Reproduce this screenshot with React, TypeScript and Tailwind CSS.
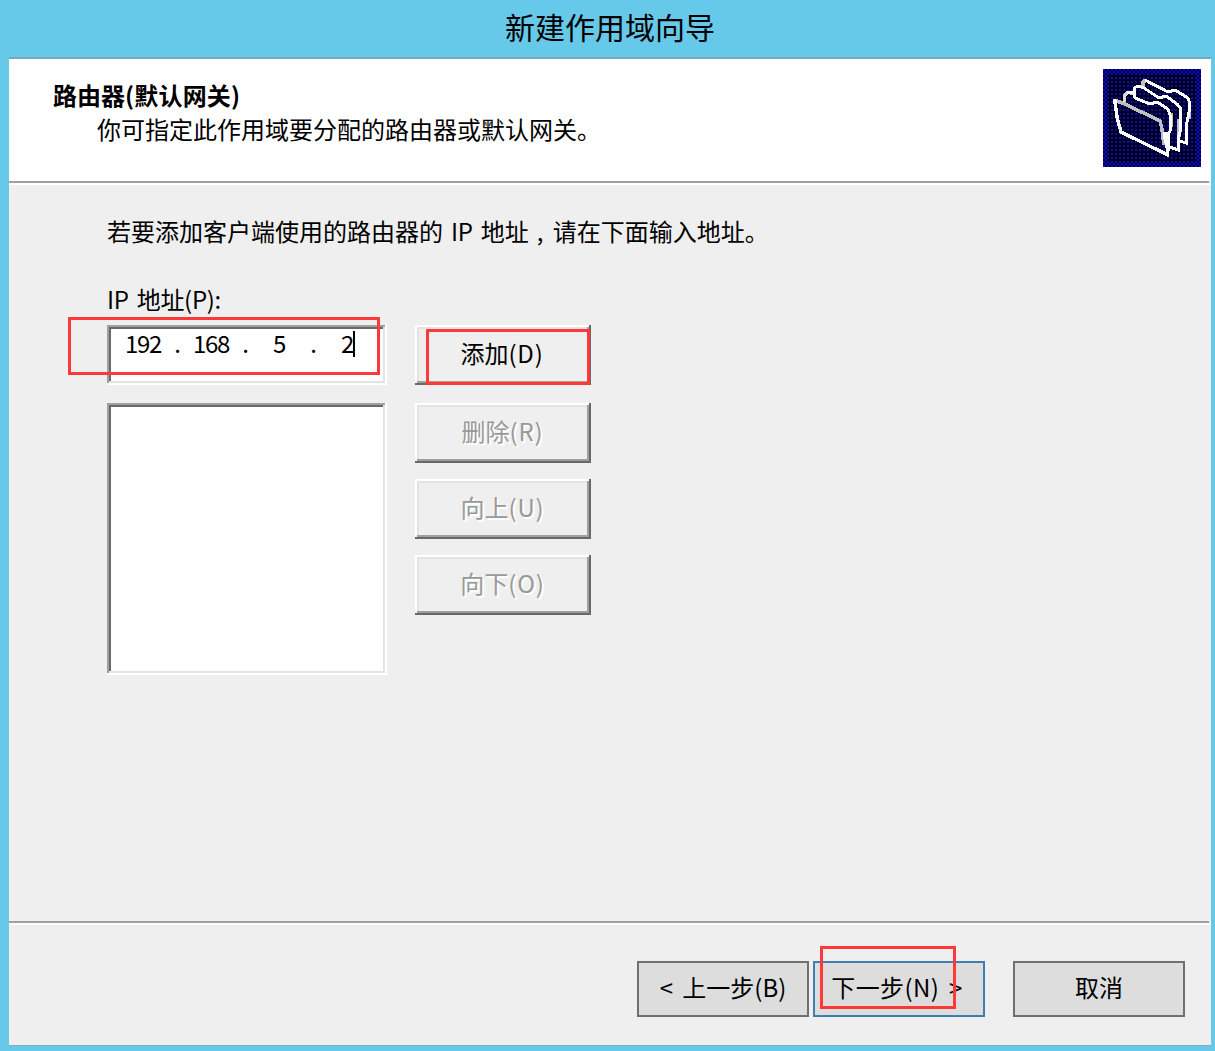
import React, { useState } from 'react';
import clsx from 'clsx';

const octets = ['192', '168', '5', '2'];

const sunken =
  'bg-white shadow-[inset_-2px_-2px_#fff,inset_2px_2px_#a0a0a0,inset_-4px_-4px_#e3e3e3,inset_4px_4px_#696969]';
const raised =
  'shadow-[inset_-2px_-2px_#696969,inset_2px_2px_#fff,inset_-4px_-4px_#a0a0a0,inset_4px_4px_#e3e3e3]';

const FolderIcon = () => (
  <svg width="98" height="98" viewBox="0 0 49 49" shapeRendering="crispEdges" fill="none">
    <defs>
      <pattern id="checker" width="2" height="2" patternUnits="userSpaceOnUse">
        <rect width="2" height="2" fill="#000" />
        <rect width="1" height="1" fill="#00f" />
        <rect x="1" y="1" width="1" height="1" fill="#00f" />
      </pattern>
      <pattern id="dots" width="2" height="2" patternUnits="userSpaceOnUse">
        <rect width="2" height="2" fill="#000" />
        <rect width="1" height="1" fill="#00f" />
      </pattern>
    </defs>
    <rect width="49" height="49" fill="url(#checker)" />
    <rect x="3" y="3" width="43" height="43" fill="url(#dots)" />
    {/* back folder */}
    <path d="M20 9V6.5L21.5 5.5" stroke="#c0c0c0" strokeWidth="2" />
    <path d="M43.5 19V25M42 28V37" stroke="#c0c0c0" strokeWidth="1.4" />
    <path d="M21 5.5L32.5 11.5L36 10.5L42.5 14.5L43.3 17V20L41.5 29V37L38.5 36" stroke="#fff" strokeWidth="1.5" />
    {/* third folder */}
    <path d="M38 25V34" stroke="#c0c0c0" strokeWidth="1.8" />
    <path d="M15.5 13V9.5L17.5 8.5L20.5 9.5L28 14.5L31.5 13.5L37 17.5L38.7 19.5V31L37.5 35V40.5L33.5 39" stroke="#fff" strokeWidth="1.5" />
    {/* second folder */}
    <path d="M10.8 17V13L12.5 11.8L15.5 12" stroke="#d8d8d8" strokeWidth="1.8" />
    <path d="M34.2 22V29" stroke="#c0c0c0" strokeWidth="1.8" />
    <path d="M12 11.5H15.5L16 14.5L23.5 17.5L27 16.5L32.5 20L33.5 23V31L32.5 33" stroke="#fff" strokeWidth="1.5" />
    {/* front folder */}
    <path d="M5.5 15.5L11 17.5L28.5 26L29.5 30L30.5 38" stroke="#c0c0c0" strokeWidth="1.8" />
    <path d="M5.8 15L7 24L9 31.5L32.5 43" stroke="#fff" strokeWidth="1.7" />
    <path d="M30 31.5H33.5V38L33 44H32L31 38L30 34Z" fill="#fff" />
  </svg>
);

const SideButton = ({ text, hotkey, disabled = false }: { text: string; hotkey: string; disabled?: boolean }) => (
  <button
    disabled={disabled}
    className={clsx(
      'h-[60px] w-44 pb-1',
      raised,
      disabled ? 'pr-px text-[#999] [text-shadow:2px_2px_0_#fff]' : 'pr-0.5'
    )}
  >
    {text}
    <span className="tracking-[0.8px]">({hotkey})</span>
  </button>
);

const FooterButton = ({ label, primary = false }: { label: string; primary?: boolean }) => (
  <button
    className={clsx(
      'h-14 w-[172px] whitespace-pre border-2 bg-[#ddd] pb-1 [word-spacing:4px]',
      primary ? 'border-[#3c7fb1] pr-1 tracking-[0.4px]' : 'border-[#707070]'
    )}
  >
    {label}
  </button>
);

const App = () => {
  const [routers] = useState<string[]>([]);

  return (
    <div className="flex h-[1051px] w-[1215px] flex-col bg-[#66c9ea] pr-1 pl-[9px] pb-[5px] font-['Noto_Sans_CJK_SC',sans-serif] text-2xl leading-none text-black">
      {/* Title bar */}
      <div className="flex h-[59px] shrink-0 items-center justify-center border-b-2 border-[#74a9c4] pb-1.5 text-[30px]">
        新建作用域向导
      </div>

      <div className="flex flex-1 flex-col border-b border-[#7badc3] bg-[#efefef]">
        {/* Header */}
        <header className="flex h-[122px] justify-between bg-white pt-[10px] pr-[10px] pl-11">
          <div className="pt-3.5">
            <h1 className="font-bold">
              路由器<span className="tracking-[0.2px]">(默认网关)</span>
            </h1>
            <p className="mt-[10px] pl-11">你可指定此作用域要分配的路由器或默认网关。</p>
          </div>
          <FolderIcon />
        </header>
        <div className="mr-0.5 h-0.5 bg-[#a0a0a0]" />
        <div className="h-0.5 bg-white" />

        {/* Body */}
        <main className="h-[736px] pt-[34px] pl-[98px]">
          <p className="whitespace-pre">
            若要添加客户端使用的路由器的<span className="tracking-[-0.3px] [word-spacing:3px]"> IP </span>地址
            <span className="inline-block w-6 pl-2 text-left">,</span>请在下面输入地址。
          </p>
          <p className="mt-11 tracking-[-0.3px] [word-spacing:3px]">IP 地址(P):</p>

          <div className="mt-3.5 flex gap-7">
            <div className="flex flex-col gap-[18px]">
              <div className={clsx('relative h-[60px] w-[280px]', sunken)}>
                <div className="flex pt-1.5 pl-2.5 tracking-[-1.3px]">
                  {octets.map((octet, i) => (
                    <React.Fragment key={i}>
                      {i > 0 && <span className="w-4 text-center">.</span>}
                      <span className={clsx(i === 3 ? 'w-8 text-right' : 'w-[52px] text-center')}>{octet}</span>
                    </React.Fragment>
                  ))}
                  <span className="h-[26px] w-0.5 shrink-0 bg-black" />
                </div>
                <div className="absolute top-[-8px] left-[-39px] h-[58px] w-[312px] border-3 border-[#ff3838]" />
              </div>
              <div className={clsx('h-[272px] w-[280px] p-1', sunken)}>
                <ul>
                  {routers.map((ip) => (
                    <li key={ip}>{ip}</li>
                  ))}
                </ul>
              </div>
            </div>

            <div className="flex flex-col gap-4">
              <div className="relative mb-0.5 h-[60px]">
                <SideButton text="添加" hotkey="D" />
                <div className="absolute top-1 left-[11px] h-14 w-[164px] border-3 border-[#ff3838]" />
              </div>
              <SideButton text="删除" hotkey="R" disabled />
              <SideButton text="向上" hotkey="U" disabled />
              <SideButton text="向下" hotkey="O" disabled />
            </div>
          </div>
        </main>

        {/* Footer */}
        <div className="mr-0.5 h-0.5 bg-[#a0a0a0]" />
        <div className="h-0.5 bg-white" />
        <footer className="flex justify-end pt-9 pr-[26px]">
          <FooterButton label="< 上一步(B)" />
          <div className="relative mr-7 ml-1">
            <FooterButton label="下一步(N) >" primary />
            <div className="absolute top-[-15px] left-[7px] h-[63px] w-[136px] border-3 border-[#ff3838]" />
          </div>
          <FooterButton label="取消" />
        </footer>
      </div>
    </div>
  );
};

export default App;
